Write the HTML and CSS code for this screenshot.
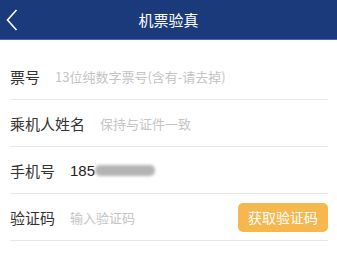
FILE: index.html
```html
<!DOCTYPE html>
<html lang="zh">

<head>
    <meta charset="UTF-8">
    <meta name="viewport" content="width=device-width, initial-scale=1.0">
    <title>机票验真</title>
    <link rel="stylesheet" href="styles.css">
</head>

<body>
    <div class="header">
        <div class="back">
            <svg width="12" height="22" viewBox="0 0 12 22">
                <path d="M10.5 1 L1.5 11 L10.5 21" fill="none" stroke="#ffffff" stroke-width="1.6" />
            </svg>
        </div>
        <h1 class="title">机票验真</h1>
    </div>

    <div class="form">
        <div class="row">
            <span class="label">票号</span>
            <span class="hint">13位纯数字票号(含有-请去掉)</span>
        </div>
        <div class="row">
            <span class="label">乘机人姓名</span>
            <span class="hint">保持与证件一致</span>
        </div>
        <div class="row">
            <span class="label">手机号</span>
            <span class="phone">185</span>
            <span class="blur"></span>
        </div>
        <div class="row">
            <span class="label">验证码</span>
            <span class="hint">输入验证码</span>
            <button class="getcode">获取验证码</button>
        </div>
    </div>
</body>

</html>
```

FILE: styles.css
```css
body {
    margin: 0;
    background-color: #ffffff;
    font-family: "Noto Sans CJK SC", "Noto Sans", sans-serif;
}

.header {
    height: 39px;
    background-color: #1b3a7c;
    border-bottom: 1px solid #4a68a6;
    display: flex;
    align-items: center;
    justify-content: center;
    position: relative;
}

.back {
    position: absolute;
    left: 6px;
    top: 9px;
}

.title {
    margin: 0;
    font-size: 15px;
    font-weight: normal;
    color: #ffffff;
}

.form {
    padding-top: 13px;
}

.row {
    height: 46px;
    margin: 0 9px 0 10px;
    border-bottom: 1px solid #e8e8e8;
    display: flex;
    align-items: center;
}

.label {
    font-size: 15px;
    color: #333333;
    margin-right: 15px;
}

.label:first-child:nth-last-child(2) {
    margin-right: 15px;
}

.hint {
    font-size: 13px;
    color: #c4c4c4;
}

.phone {
    font-family: "Liberation Sans", sans-serif;
    font-size: 15px;
    color: #222222;
}

.blur {
    width: 60px;
    height: 11px;
    border-radius: 5px;
    background-color: #b4b4b4;
    filter: blur(1.5px);
}

.getcode {
    margin-left: auto;
    width: 90px;
    height: 29px;
    border: none;
    border-radius: 5px;
    background-color: #f5b74e;
    color: #ffffff;
    font-family: "Noto Sans CJK SC", sans-serif;
    font-size: 14px;
    padding: 0;
}
```
